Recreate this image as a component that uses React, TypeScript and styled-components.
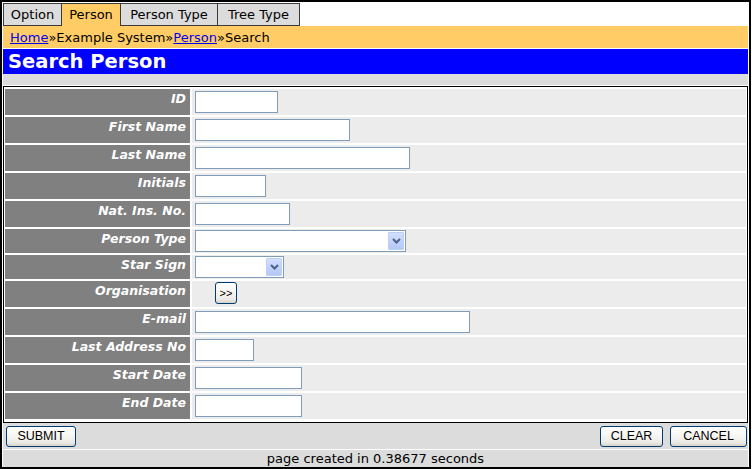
import React from "react";
import styled, { createGlobalStyle } from "styled-components";

const Global = createGlobalStyle`
  html, body { margin: 0; padding: 0; background: #fff; }
  body { font-family: "DejaVu Sans", Verdana, sans-serif; }
`;

const Frame = styled.div`
  width: 751px;
  height: 469px;
  box-sizing: border-box;
  border: 2px solid #000;
  padding: 1px 1px 0 1px;
  display: flex;
  flex-direction: column;
  background: #fff;
`;

const TabBar = styled.div`
  display: flex;
  height: 23px;
`;

const Tab = styled.div<{ $active?: boolean; $w: number; $last?: boolean }>`
  box-sizing: border-box;
  width: ${(p) => p.$w}px;
  height: 23px;
  border: 1px solid #3a3a3a;
  border-right: ${(p) => (p.$last ? "1px solid #3a3a3a" : "none")};
  border-bottom: ${(p) => (p.$active ? "none" : "1px solid #3a3a3a")};
  background: ${(p) => (p.$active ? "#ffcc66" : "#dcdcdc")};
  font-size: 13px;
  line-height: 21px;
  text-align: center;
  color: #000;
`;

const Crumbs = styled.div`
  height: 22px;
  background: #ffcc66;
  padding-left: 7px;
  display: flex;
  align-items: center;
  font-size: 13px;
  color: #000;
`;

const CrumbLink = styled.a`
  color: #0000ee;
  text-decoration: underline;
`;

const Title = styled.div`
  margin-top: 1px;
  height: 25px;
  background: #0000ff;
  color: #fff;
  font-weight: bold;
  font-size: 19.5px;
  line-height: 25px;
  padding-left: 5px;
`;

const SubBar = styled.div`
  height: 11px;
  background: #dcdcdc;
`;

const FormTable = styled.div`
  margin-top: 1px;
  border: 1px solid #000;
  padding: 2px 1px 3px 1px;
  display: grid;
  grid-template-columns: 185px 1fr;
  gap: 2px;
  background: #fff;
`;

const Label = styled.div<{ $h: number }>`
  height: ${(p) => p.$h}px;
  box-sizing: border-box;
  background: #808080;
  color: #fff;
  font-weight: bold;
  font-style: italic;
  font-size: 12.5px;
  line-height: 15px;
  text-align: right;
  padding: 2px 4px 0 0;
`;

const Value = styled.div<{ $h: number }>`
  height: ${(p) => p.$h}px;
  box-sizing: border-box;
  background: #ececec;
  display: flex;
  align-items: center;
  padding: 0 3px;
`;

const TextInput = styled.input<{ $w: number }>`
  width: ${(p) => p.$w}px;
  height: 22px;
  box-sizing: border-box;
  border: 1px solid #7f9db9;
  background: #fff;
  padding: 1px 2px;
  margin: 0;
  font-family: "DejaVu Sans", sans-serif;
  font-size: 12px;
  outline: none;
`;

const SelectBox = styled.div<{ $w: number }>`
  position: relative;
  width: ${(p) => p.$w}px;
  height: 22px;
  box-sizing: border-box;
  border: 1px solid #7f9db9;
  background: #fff;
`;

const NativeSelect = styled.select`
  appearance: none;
  -webkit-appearance: none;
  width: 100%;
  height: 100%;
  border: none;
  background: transparent;
  margin: 0;
  padding: 0 2px;
  font-family: "DejaVu Sans", sans-serif;
  font-size: 12px;
  outline: none;
`;

const DropButton = styled.span`
  position: absolute;
  top: 1px;
  right: 1px;
  bottom: 1px;
  width: 16px;
  box-sizing: border-box;
  border: 1px solid #bccdf6;
  border-radius: 1px;
  background: linear-gradient(180deg, #d3defd 0%, #c2d3fb 50%, #b4c8f6 100%);
  display: flex;
  align-items: center;
  justify-content: center;
  pointer-events: none;
`;

const XpButton = styled.button<{ $w: number }>`
  width: ${(p) => p.$w}px;
  height: 21px;
  box-sizing: border-box;
  margin: 0;
  padding: 0;
  border: 1px solid #003c74;
  border-radius: 3px;
  background: linear-gradient(180deg, #ffffff 0%, #f7f6f2 45%, #ecebe5 80%, #d8d3c8 100%);
  color: #000;
  font-family: "Liberation Sans", Arial, sans-serif;
  font-size: 12.5px;
  line-height: 19px;
  cursor: pointer;
`;

const PickButton = styled(XpButton)`
  height: 22px;
  margin-left: 20px;
  align-self: flex-start;
  margin-top: 1px;
  font-size: 11px;
`;

const ButtonBar = styled.div`
  height: 26px;
  background: #dcdcdc;
  display: flex;
  align-items: center;
  justify-content: space-between;
  padding: 0 1px 0 3px;
`;

const ButtonGroup = styled.div`
  display: flex;
  gap: 7px;
`;

const Footer = styled.div`
  margin-top: 1px;
  height: 17px;
  background: #dcdcdc;
  font-size: 13px;
  line-height: 17px;
  text-align: center;
  color: #000;
`;

type Field = {
  label: string;
  kind: "text" | "select" | "button";
  w?: number;
};

const fields: Field[] = [
  { label: "ID", kind: "text", w: 83 },
  { label: "First Name", kind: "text", w: 155 },
  { label: "Last Name", kind: "text", w: 215 },
  { label: "Initials", kind: "text", w: 71 },
  { label: "Nat. Ins. No.", kind: "text", w: 95 },
  { label: "Person Type", kind: "select", w: 211 },
  { label: "Star Sign", kind: "select", w: 89 },
  { label: "Organisation", kind: "button" },
  { label: "E-mail", kind: "text", w: 275 },
  { label: "Last Address No", kind: "text", w: 59 },
  { label: "Start Date", kind: "text", w: 107 },
  { label: "End Date", kind: "text", w: 107 },
];

const tabs = [
  { name: "Option", w: 58 },
  { name: "Person", w: 59, active: true },
  { name: "Person Type", w: 97 },
  { name: "Tree Type", w: 83 },
];

const Chevron = () => (
  <svg width="9" height="6" viewBox="0 0 9 6">
    <path d="M1 1 L4.5 4.5 L8 1" stroke="#4d6185" strokeWidth="2" fill="none" />
  </svg>
);

export default function App() {
  return (
    <>
      <Global />
      <Frame>
        <TabBar>
          {tabs.map((t, i) => (
            <Tab key={t.name} $w={t.w} $active={t.active} $last={i === tabs.length - 1}>
              {t.name}
            </Tab>
          ))}
        </TabBar>
        <Crumbs>
          <CrumbLink href="#">Home</CrumbLink>»Example System»
          <CrumbLink href="#">Person</CrumbLink>»Search
        </Crumbs>
        <Title>Search Person</Title>
        <SubBar />
        <FormTable>
          {fields.map((f) => {
            const h = f.kind === "select" ? 24 : 26;
            return (
              <React.Fragment key={f.label}>
                <Label $h={h}>{f.label}</Label>
                <Value $h={h}>
                  {f.kind === "text" && <TextInput $w={f.w!} type="text" />}
                  {f.kind === "select" && (
                    <SelectBox $w={f.w!}>
                      <NativeSelect>
                        <option value=""></option>
                      </NativeSelect>
                      <DropButton>
                        <Chevron />
                      </DropButton>
                    </SelectBox>
                  )}
                  {f.kind === "button" && <PickButton $w={22} type="button">&gt;&gt;</PickButton>}
                </Value>
              </React.Fragment>
            );
          })}
        </FormTable>
        <ButtonBar>
          <XpButton $w={70} type="button">SUBMIT</XpButton>
          <ButtonGroup>
            <XpButton $w={63} type="button">CLEAR</XpButton>
            <XpButton $w={77} type="button">CANCEL</XpButton>
          </ButtonGroup>
        </ButtonBar>
        <Footer>page created in 0.38677 seconds</Footer>
      </Frame>
    </>
  );
}
